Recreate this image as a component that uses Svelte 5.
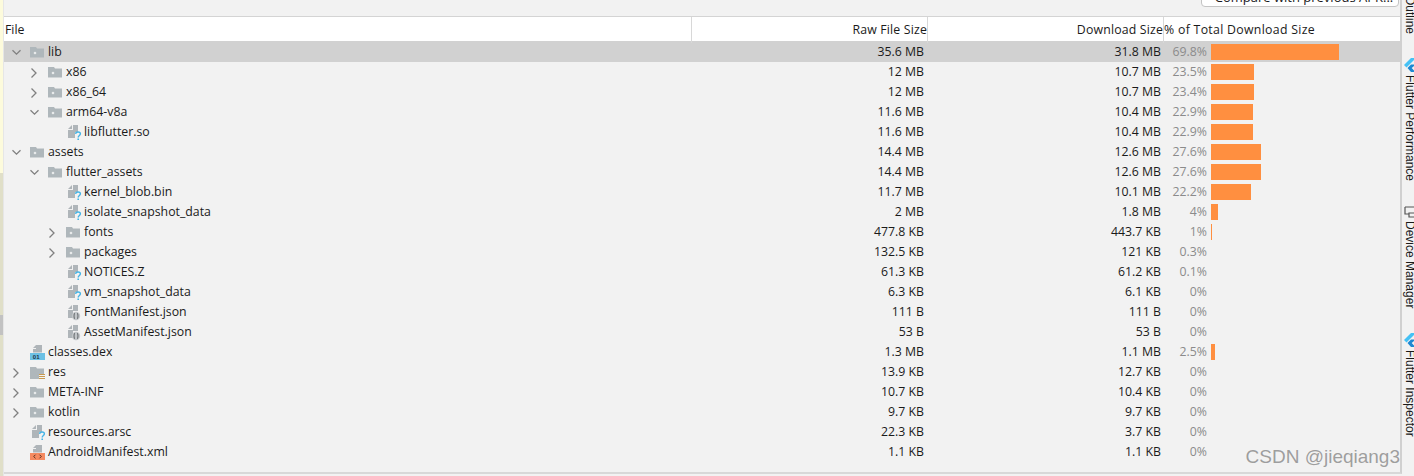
<script>
  const rows = [
    { n: 'lib', d: 0, c: 'open', i: 'folder', raw: '35.6 MB', dl: '31.8 MB', p: '69.8%', w: 128, sel: true },
    { n: 'x86', d: 1, c: 'closed', i: 'folder', raw: '12 MB', dl: '10.7 MB', p: '23.5%', w: 43 },
    { n: 'x86_64', d: 1, c: 'closed', i: 'folder', raw: '12 MB', dl: '10.7 MB', p: '23.4%', w: 43 },
    { n: 'arm64-v8a', d: 1, c: 'open', i: 'folder', raw: '11.6 MB', dl: '10.4 MB', p: '22.9%', w: 42 },
    { n: 'libflutter.so', d: 2, i: 'unknown', raw: '11.6 MB', dl: '10.4 MB', p: '22.9%', w: 42 },
    { n: 'assets', d: 0, c: 'open', i: 'folder', raw: '14.4 MB', dl: '12.6 MB', p: '27.6%', w: 50 },
    { n: 'flutter_assets', d: 1, c: 'open', i: 'folder', raw: '14.4 MB', dl: '12.6 MB', p: '27.6%', w: 50 },
    { n: 'kernel_blob.bin', d: 2, i: 'unknown', raw: '11.7 MB', dl: '10.1 MB', p: '22.2%', w: 40 },
    { n: 'isolate_snapshot_data', d: 2, i: 'unknown', raw: '2 MB', dl: '1.8 MB', p: '4%', w: 7 },
    { n: 'fonts', d: 2, c: 'closed', i: 'folder', raw: '477.8 KB', dl: '443.7 KB', p: '1%', w: 1 },
    { n: 'packages', d: 2, c: 'closed', i: 'folder', raw: '132.5 KB', dl: '121 KB', p: '0.3%', w: 0 },
    { n: 'NOTICES.Z', d: 2, i: 'unknown', raw: '61.3 KB', dl: '61.2 KB', p: '0.1%', w: 0 },
    { n: 'vm_snapshot_data', d: 2, i: 'unknown', raw: '6.3 KB', dl: '6.1 KB', p: '0%', w: 0 },
    { n: 'FontManifest.json', d: 2, i: 'json', raw: '111 B', dl: '111 B', p: '0%', w: 0 },
    { n: 'AssetManifest.json', d: 2, i: 'json', raw: '53 B', dl: '53 B', p: '0%', w: 0 },
    { n: 'classes.dex', d: 0, i: 'dex', raw: '1.3 MB', dl: '1.1 MB', p: '2.5%', w: 4 },
    { n: 'res', d: 0, c: 'closed', i: 'res', raw: '13.9 KB', dl: '12.7 KB', p: '0%', w: 0 },
    { n: 'META-INF', d: 0, c: 'closed', i: 'folder', raw: '10.7 KB', dl: '10.4 KB', p: '0%', w: 0 },
    { n: 'kotlin', d: 0, c: 'closed', i: 'folder', raw: '9.7 KB', dl: '9.7 KB', p: '0%', w: 0 },
    { n: 'resources.arsc', d: 0, i: 'unknown', raw: '22.3 KB', dl: '3.7 KB', p: '0%', w: 0 },
    { n: 'AndroidManifest.xml', d: 0, i: 'xml', raw: '1.1 KB', dl: '1.1 KB', p: '0%', w: 0 }
  ];
</script>

{#snippet icon(kind)}
  <svg class="ic" width="16" height="16" viewBox="0 0 16 16">
    {#if kind === 'folder'}
      <path d="M0 3h6l1 1.500h7V13.500H0z" fill="#afb7bb" />
      <circle cx="5" cy="9" r="1.300" fill="#e8eaeb" />
    {:else if kind === 'res'}
      <path d="M0 3h6l1 1.500h7V10H9v5H0z" fill="#afb7bb" />
      <path d="M9 10.500h6M9 12.500h6M9 14.500h6" stroke="#c99a4f" stroke-width="1" />
    {:else if kind === 'unknown'}
      <path d="M2 14V6h5V1h5v7H9v6z" fill="#afb5b9" />
      <path d="M2 5l4-4v4z" fill="#afb5b9" />
      <path d="M9.600 9.800c.3-2.400 4.800-2.400 4.800 0 0 1.800-2.200 1.700-2.200 3.700" fill="none" stroke="#45b4e6" stroke-width="1.400" />
      <rect x="11.400" y="14.500" width="1.600" height="1.500" fill="#45b4e6" />
    {:else if kind === 'json'}
      <path d="M2 14V6h5V1h5v6H7v7z" fill="#afb5b9" />
      <path d="M2 5l4-4v4z" fill="#afb5b9" />
      <circle cx="10" cy="12" r="4.200" fill="#c2c6c9" />
      <path d="M9 9.300c-1.300 0-.5 2.700-1.300 2.700.8 0 0 2.700 1.300 2.700M11 9.300c1.300 0 .5 2.700 1.300 2.700-.8 0-0 2.700-1.300 2.700" fill="none" stroke="#4d5154" stroke-width=".9" />
    {:else if kind === 'dex'}
      <path d="M3 8.500V5h3V1h6v7.500z" fill="#afb5b9" />
      <path d="M3 4l3-3v3z" fill="#afb5b9" />
      <rect x="0" y="9" width="15" height="7" fill="#6cc0e4" />
      <text x="2.800" y="15" class="tiny">01</text>
    {:else if kind === 'xml'}
      <path d="M3 8.500V5h3V1h6v7.500z" fill="#afb5b9" />
      <path d="M3 4l3-3v3z" fill="#afb5b9" />
      <rect x="0" y="9" width="15" height="7" fill="#f58a60" />
      <path d="M5.500 10.700L3.700 12.500l1.800 1.800M9.500 10.700l1.800 1.800-1.800 1.800" fill="none" stroke="#5a3322" stroke-width="1" />
    {/if}
  </svg>
{/snippet}

<div class="page">
  <div class="edge">
    <div class="edge-top"></div>
    <div class="edge-mid"></div>
    <div class="edge-grip"></div>
    <div class="edge-end"></div>
  </div>

  <div class="main">
    <div class="topbar">
      <button class="compare">Compare with previous APK...</button>
    </div>

    <div class="table">
      <div class="row head">
        <div class="c-file h-file">File</div>
        <div class="c-raw h-num">Raw File Size</div>
        <div class="c-dl h-num">Download Size</div>
        <div class="c-pct h-pct">% of Total Download Size</div>
      </div>

      {#each rows as r}
        <div class="row" class:sel={r.sel}>
          <div class="c-file tree" style="padding-left: {10 + r.d * 18}px">
            <span class="chev">
              {#if r.c === 'open'}
                <svg width="11" height="11" viewBox="0 0 11 11"><path d="M2.500 3.200l4 4 4-4" fill="none" stroke="#808080" stroke-width="1.300" /></svg>
              {:else if r.c === 'closed'}
                <svg width="11" height="11" viewBox="0 0 11 11"><path d="M3.500 1.500L8 6l-4.500 4.500" fill="none" stroke="#808080" stroke-width="1.300" /></svg>
              {/if}
            </span>
            {@render icon(r.i)}
            <span class="name">{r.n}</span>
          </div>
          <div class="c-raw num raw">{r.raw}</div>
          <div class="c-dl num">{r.dl}</div>
          <div class="c-pct pct">
            <span class="pv">{r.p}</span>
            {#if r.w}<span class="bar" style="width: {r.w}px"></span>{/if}
          </div>
        </div>
      {/each}
    </div>
  </div>

  <aside class="side">
    <div class="tab t-outline"><span>Outline</span></div>
    <div class="tab t-perf">
      <svg width="12" height="14" viewBox="0 0 12 14"><path d="M7 0L0 7l2.500 2.500L12 0z" fill="#45c1f5" /><path d="M7 6.500L3.500 10 7 14h4.500l-3.800-4 3.800-3.500z" fill="#1e88d2" /></svg>
      <span>Flutter Performance</span>
    </div>
    <div class="tab t-device">
      <svg width="12" height="12" viewBox="0 0 12 12"><path d="M1 1h10v5M5 8H1V1M5 11V7h6v4z" fill="none" stroke="#555" stroke-width="1.200" /></svg>
      <span>Device Manager</span>
    </div>
    <div class="tab t-insp">
      <svg width="12" height="14" viewBox="0 0 12 14"><path d="M7 0L0 7l2.500 2.500L12 0z" fill="#45c1f5" /><path d="M7 6.500L3.500 10 7 14h4.500l-3.800-4 3.800-3.500z" fill="#1e88d2" /></svg>
      <span>Flutter Inspector</span>
    </div>
  </aside>

  <div class="mark">CSDN @jieqiang3</div>
</div>

<style>
  :global(body) {
    margin: 0;
    background: #f2f2f2;
  }
  .page {
    position: relative;
    display: flex;
    width: 1414px;
    height: 476px;
    overflow: hidden;
    background: #f2f2f2;
    color: #1a1a1a;
    font: 12.300px/20px "Open Sans", "Noto Sans", sans-serif;
  }
  .edge {
    flex: none;
    width: 4px;
    box-sizing: border-box;
    border-right: 1px solid #e6e6e6;
    display: flex;
    flex-direction: column;
  }
  .edge-top {
    height: 173px;
    background: #fdfbdc;
  }
  .edge-mid {
    height: 142px;
    background: #e0dfc8;
  }
  .edge-grip {
    height: 20px;
    background: #c2c2c2;
  }
  .edge-end {
    flex: 1;
    background: #e0dfc8;
  }
  .main {
    flex: none;
    width: 1398px;
    height: 474px;
    box-sizing: border-box;
    border-right: 2px solid #d0d0d0;
    border-bottom: 2px solid #d8d8d8;
    display: flex;
    flex-direction: column;
  }
  .topbar {
    flex: none;
    height: 17px;
    box-sizing: border-box;
    border-bottom: 1px solid #d4d4d4;
    display: flex;
    justify-content: flex-end;
    align-items: flex-start;
    padding-right: 1px;
  }
  .compare {
    flex: none;
    width: 198px;
    height: 20px;
    margin-top: -13px;
    padding: 0 0 0 8px;
    background: #fff;
    border: 1px solid #c4c4c4;
    border-radius: 4px;
    font: 13px/16px "Open Sans", sans-serif;
    color: #1a1a1a;
    box-sizing: border-box;
    overflow: hidden;
  }
  .row {
    display: grid;
    grid-template-columns: 688px 236px 236px 1fr;
    height: 20px;
  }
  .row.sel {
    height: 21px;
    padding-top: 1px;
    box-sizing: border-box;
    background: #d1d1d1;
  }
  .head {
    height: 24px;
    background: #fff;
    line-height: 26px;
  }
  .head > div {
    border-right: 1px solid #d8d8d8;
  }
  .head > div:last-child {
    border-right: 0;
  }
  .h-file {
    padding-left: 1px;
  }
  .h-num {
    text-align: right;
    letter-spacing: 0.17px;
  }
  .h-pct {
    white-space: nowrap;
    letter-spacing: 0.3px;
  }
  .tree {
    display: flex;
    align-items: center;
    box-sizing: border-box;
  }
  .chev {
    flex: none;
    width: 20px;
    height: 11px;
    display: flex;
    margin-left: -4px;
  }
  .ic {
    flex: none;
    margin-right: 2px;
    overflow: visible;
  }
  .tiny {
    font: bold 6px "Liberation Sans", sans-serif;
    fill: #234;
  }
  .num {
    text-align: right;
    padding-right: 3px;
  }
  .raw {
    padding-right: 4px;
  }
  .pct {
    display: flex;
    align-items: center;
  }
  .pv {
    flex: none;
    width: 43px;
    text-align: right;
    color: #8b8b8b;
    margin-right: 4px;
  }
  .bar {
    flex: none;
    height: 16px;
    background: #ff8f40;
  }
  .side {
    flex: 1;
    min-width: 0;
    display: flex;
    flex-direction: column;
    padding-left: 1px;
  }
  .tab {
    writing-mode: vertical-rl;
    display: flex;
    align-items: center;
    gap: 3px;
    font: 12px/14px "Liberation Sans", Arial, sans-serif;
    color: #1a1a1a;
    width: 14px;
    flex: none;
  }
  .t-outline {
    margin-top: -4px;
    height: 36px;
  }
  .t-perf {
    margin-top: 26px;
  }
  .t-device {
    margin-top: 25px;
  }
  .t-insp {
    margin-top: 25px;
  }
  .mark {
    position: absolute;
    right: 14px;
    bottom: 7px;
    font: 19px/24px "Liberation Sans", sans-serif;
    color: rgba(120, 120, 120, 0.7);
  }
</style>
